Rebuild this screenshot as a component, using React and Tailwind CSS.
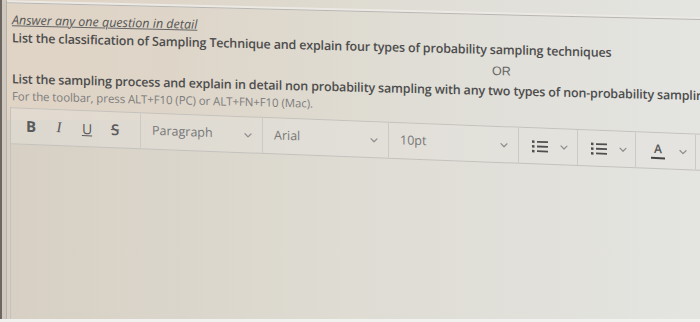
import { ChevronDown } from 'lucide-react';

function Chevron() {
  return <ChevronDown className="h-3 w-3 shrink-0 text-[#8f8f8f]" strokeWidth={2.5} />;
}

function ListIcon() {
  return (
    <svg width="16" height="14" viewBox="0 0 16 14" className="shrink-0 text-[#4f4f4f]">
      <rect x="0" y="1" width="2.5" height="2.5" fill="currentColor" />
      <rect x="0" y="5.8" width="2.5" height="2.5" fill="currentColor" />
      <rect x="0" y="10.5" width="2.5" height="2.5" fill="currentColor" />
      <rect x="5" y="1.4" width="11" height="1.8" fill="currentColor" />
      <rect x="5" y="6.1" width="11" height="1.8" fill="currentColor" />
      <rect x="5" y="10.8" width="11" height="1.8" fill="currentColor" />
    </svg>
  );
}

function Select({ label, width }) {
  return (
    <div className={`flex h-full shrink-0 items-center justify-between border-r border-[#cbcac6] pl-[11px] pr-[8px] ${width}`}>
      <span className="text-[12.5px] text-[#777]">{label}</span>
      <Chevron />
    </div>
  );
}

export default function App() {
  return (
    <div className="relative h-[322px] w-[700px] overflow-hidden bg-gradient-to-r from-[#d7cfc3] via-[#dedcd3] to-[#e4e4e1] font-['Open_Sans',sans-serif]">
      <div className="absolute left-0 top-0 h-[120px] w-[420px] bg-gradient-to-r from-[#e4d6c6]/70 to-transparent" />
      <div className="relative flex h-[340px] w-[720px] origin-top-left skew-y-[1.4deg]">
        <div className="w-[2px] shrink-0 bg-[#6d6660]" />
        <div className="w-[5px] shrink-0 border-r border-[#b9b2a8] bg-[#cfc8be]" />
        <div className="flex min-w-0 flex-1 flex-col">
          <div className="h-[3px] border-b border-[#b8b6b2] bg-[#ece9e4]" />
          <div className="pl-[5px] pt-[8px] text-[#4d4d4d]">
            <p className="text-[12.5px] italic leading-[18px] text-[#555] underline decoration-[#666]">
              Answer any one question in detail
            </p>
            <p className="whitespace-nowrap text-[12.5px] font-semibold leading-[18px] tracking-[-0.17px]">
              List the classification of Sampling Technique and explain four types of probability sampling techniques
            </p>
            <p className="pl-[480px] pt-[2px] font-['Liberation_Sans',sans-serif] text-[12.5px] leading-[20px] text-[#666]">OR</p>
            <p className="whitespace-nowrap pt-[1px] text-[12.5px] font-semibold leading-[18px] tracking-[-0.17px]">
              List the sampling process and explain in detail non probability sampling with any two types of non-probability sampling techniques
            </p>
            <p className="whitespace-nowrap text-[11.5px] leading-[16px] tracking-[-0.1px] text-[#7d7d7d]">
              For the toolbar, press ALT+F10 (PC) or ALT+FN+F10 (Mac).
            </p>
          </div>
          <div className="ml-[3px] mt-[3px] flex flex-1 origin-top-left skew-y-[0.8deg] flex-col border-l border-t border-[#c4c2bd]">
            <div className="flex h-[36px] items-center border-b border-[#c4c2bd] bg-[#e6e4de]/40">
              <div className="flex h-full shrink-0 items-center border-r border-[#cbcac6] pl-[6px] pr-[11px] text-[15px] text-[#5a5a5a]">
                <span className="flex w-7 justify-center font-bold">B</span>
                <span className="flex w-7 justify-center font-['Liberation_Serif',serif] italic">I</span>
                <span className="flex w-7 justify-center text-[14px] underline">U</span>
                <span className="flex w-7 justify-center font-semibold line-through">S</span>
              </div>
              <Select label="Paragraph" width="w-[122px]" />
              <Select label="Arial" width="w-[126px]" />
              <Select label="10pt" width="w-[130px]" />
              <div className="flex h-full w-[59px] shrink-0 items-center gap-[10px] border-r border-[#cbcac6] pl-[13px]">
                <ListIcon />
                <Chevron />
              </div>
              <div className="flex h-full w-[58px] shrink-0 items-center gap-[10px] border-r border-[#cbcac6] pl-[13px]">
                <ListIcon />
                <Chevron />
              </div>
              <div className="flex h-full w-[60px] shrink-0 items-center gap-[12px] border-r border-[#cbcac6] pl-[15px]">
                <span className="flex flex-col items-center text-[12px] font-semibold leading-[12px] text-[#555]">
                  A
                  <span className="mt-[2px] h-[2px] w-[14px] bg-[#444]" />
                </span>
                <Chevron />
              </div>
            </div>
            <div className="flex-1" />
          </div>
        </div>
      </div>
      <div className="absolute bottom-0 left-0 h-[3px] w-full bg-[#f1f1ef]" />
    </div>
  );
}
